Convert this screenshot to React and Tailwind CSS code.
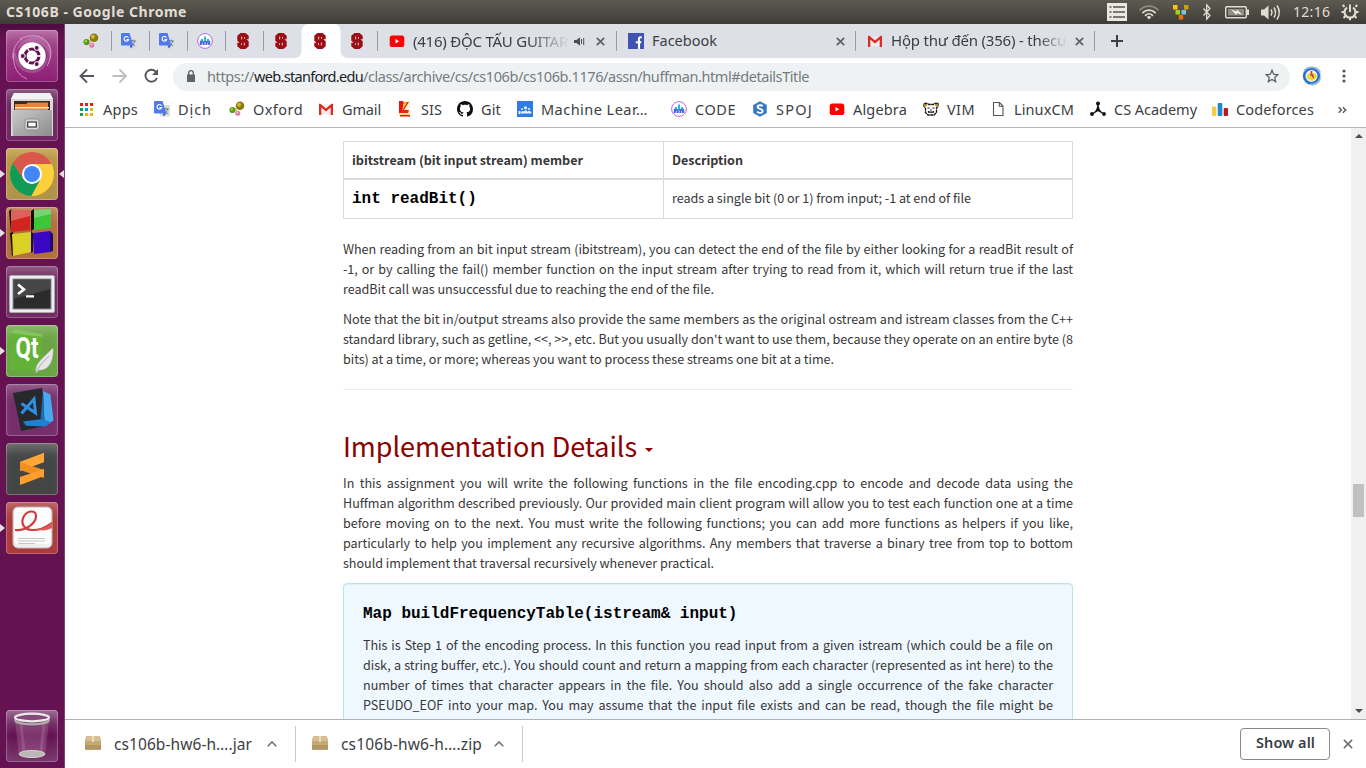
import React, { useLayoutEffect, useRef } from "react";

/* Single-line label that spreads its letters over a given width. */
function Fit({ w, children, className = "" }) {
  const ref = useRef(null);
  useLayoutEffect(() => {
    const el = ref.current;
    el.style.letterSpacing = "0px";
    const natural = el.getBoundingClientRect().width;
    el.style.letterSpacing = (w - natural) / el.textContent.length + "px";
  }, [w, children]);
  return (
    <span ref={ref} className={"inline-block shrink-0 whitespace-pre " + className}>
      {children}
    </span>
  );
}

/* ---------- favicons ---------- */
const Svg = ({ s = 16, children, className = "" }) => (
  <svg width={s} height={s} viewBox="0 0 16 16" className={"block shrink-0 " + className}>
    {children}
  </svg>
);

const Oxford = () => (
  <Svg>
    <path d="M4 9 8 7l3-3M7 8l1 4" stroke="#c9b458" strokeWidth="0.8" fill="none" />
    <circle cx="3.5" cy="9" r="3.100" fill="#5a9a16" />
    <circle cx="2.8" cy="8.2" r="1.2" fill="#a5cf50" />
    <circle cx="11" cy="4.800" r="4.300" fill="#8c7a10" />
    <circle cx="10" cy="3.800" r="2" fill="#cfbb3a" />
    <circle cx="8.800" cy="12.200" r="2.500" fill="#dd7ba6" />
    <circle cx="8.400" cy="11.600" r="1" fill="#f3bdd4" />
  </Svg>
);
const Translate = () => (
  <Svg>
    <rect x="6" y="4" width="10" height="11.5" rx="1" fill="#dcdcdc" />
    <path d="M9.3 8h5.5M12 6.8V8M13.8 8c-.6 2.200-2 3.500-3.600 4.300M10.300 9.300c.8 1.600 2.200 2.800 3.700 3.300" stroke="#607d8b" strokeWidth="1" fill="none" />
    <path d="M1 0h7.500l3.700 12.500H1a1 1 0 0 1-1-1V1a1 1 0 0 1 1-1z" fill="#5078ef" />
    <path d="M8.700 12.500h3.500L9.800 15.600z" fill="#3b5bc4" />
    <path d="M7.400 4.700A2.300 2.300 0 1 0 7.600 6.500H5.500" stroke="#fff" strokeWidth="1.100" fill="none" />
  </Svg>
);
const Code = () => (
  <Svg>
    <circle cx="8" cy="8" r="7.400" fill="#fff" stroke="#b06be0" strokeWidth="1" />
    <path d="M3 10V7.500h1V6h2v2h1V3.500h2V8h1V6h2v1.500h1V10z" fill="#28b5e8" />
    <path d="M2.800 8.300h10.400V12H2.800z" fill="#4c5fd5" />
    <path d="M5.300 12V9.800M8 12V9M10.700 12V9.800" stroke="#dfe9ff" strokeWidth="0.900" />
  </Svg>
);
const Stanford = () => (
  <Svg>
    <path d="M5.500 0h5L13.700 2.800v3.400H9.800V3.900H6.600v1.900h4.200l2.900 2.500v4.900L10.500 16h-5l-3.200-2.800V9.800h3.900v2.300h3.200v-1.900H5.200L2.300 7.700V2.800z" fill="#9b0f14" />
    <path d="M8 0v16" stroke="#9b0f14" strokeWidth="2" />
    <path d="M6.700 3.500v3M9.300 9.500v3" stroke="#f0d6d8" strokeWidth="0.800" />
  </Svg>
);
const YouTube = () => (
  <Svg>
    <rect x="0.700" y="2.500" width="14.600" height="11.500" rx="2.600" fill="#f00" />
    <path d="M6.500 6v4.500l3.700-2.250z" fill="#fff" />
  </Svg>
);
const Facebook = () => (
  <Svg>
    <rect width="16" height="16" fill="#4052b4" />
    <path d="M13.800 4.200h-1.300c-1.100 0-1.500.6-1.500 1.600V16M7.800 9.300h5.500" stroke="#fff" strokeWidth="2.100" fill="none" />
  </Svg>
);
const Gmail = () => (
  <Svg>
    <path d="M1.500 3.500h13v10h-13z" fill="#ececec" />
    <path d="M1 13.900V2.700h1.400L8 7.600l5.600-4.900H15v11.200h-2.300V6.500L8 10.400 3.300 6.500v7.400z" fill="#dc2b22" />
  </Svg>
);
const Apps = () => (
  <Svg>
    {[
      [1, 2, "#ea1c1c"], [6, 2, "#ea1c1c"], [11, 2, "#ea1c1c"],
      [1, 7, "#10a04f"], [6, 7, "#1e88f0"], [11, 7, "#fbab10"],
      [1, 12, "#10a04f"], [6, 12, "#fbab10"], [11, 12, "#fbab10"],
    ].map(([x, y, c]) => (
      <rect key={x + "-" + y} x={x} y={y} width="3" height="3" fill={c} />
    ))}
  </Svg>
);
const Sis = () => (
  <Svg>
    <path d="M2 0h11v16H2z" fill="#fff2d8" />
    <path d="M2 0h4v12H2zM3 14h10v1.500H3z" fill="#ef1010" />
    <path d="M6 1h6L7 9h5l-1 3H3L9 3H6z" fill="#e62a1a" />
    <path d="M7 1h3L5 10M2 12.500h11v1H2z" fill="#f6d21c" />
  </Svg>
);
const Github = () => (
  <Svg>
    <path
      fill="#101010"
      d="M8 0C3.580 0 0 3.580 0 8c0 3.540 2.290 6.530 5.470 7.590.4.070.55-.17.55-.38 0-.19-.01-.82-.01-1.490-2.010.37-2.530-.49-2.690-.94-.09-.23-.48-.94-.82-1.130-.28-.15-.68-.52-.01-.53.63-.01 1.080.58 1.230.82.72 1.210 1.870.87 2.330.66.070-.52.28-.87.51-1.070-1.780-.2-3.640-.89-3.640-3.950 0-.87.31-1.590.82-2.150-.08-.2-.36-1.020.08-2.120 0 0 .67-.21 2.200.82.64-.18 1.320-.27 2-.27s1.360.09 2 .27c1.530-1.040 2.200-.82 2.200-.82.44 1.100.16 1.920.08 2.120.51.56.82 1.270.82 2.150 0 3.070-1.870 3.750-3.650 3.950.29.25.54.73.54 1.480 0 1.070-.01 1.930-.01 2.200 0 .21.15.46.55.38A8.010 8.010 0 0 0 16 8c0-4.420-3.580-8-8-8z"
    />
  </Svg>
);
const Learn = () => (
  <Svg>
    <rect width="16" height="16" fill="#2f7de1" />
    <circle cx="8.500" cy="6.800" r="1.500" fill="#fff" />
    <circle cx="5" cy="8" r="1" fill="#dcebff" />
    <circle cx="12" cy="8" r="1.100" fill="#dcebff" />
    <path d="M1.500 10h2v3h-2zM4 12.500c0-3 3-3 3-1 0-3 3.500-3 3.500 0 0-2 4-2 4 1z" fill="#e9f3ff" />
  </Svg>
);
const Spoj = () => (
  <Svg>
    <path d="M8 .2 14.800 4v8L8 15.800 1.200 12V4z" fill="#3478c6" />
    <path d="M10.700 5.200C9.500 3.700 5.400 3.900 5.600 6.200c.2 2 4.900 1.500 5 3.700.1 2.400-4.200 2.600-5.500.6" stroke="#fff" strokeWidth="1.900" fill="none" />
  </Svg>
);
const Vim = () => (
  <Svg>
    <path d="M1 5.500V2.500h3.500L6 3.500h4l1.500-1h3.500v3L13.500 7v4.500L11 14H5l-2.500-2.500V7z" fill="#fff" stroke="#111" strokeWidth="1.300" strokeDasharray="3 .5" />
    <path d="M1 3h3v1.500L2 6H1zM12 3h3v3h-1l-2-1.500z" fill="#b98a20" />
    <path d="M4.500 7h2M9.500 7h2M7.200 9h1.600M5.500 10v1.200h5V10" stroke="#111" strokeWidth="1.200" fill="none" />
  </Svg>
);
const Page = () => (
  <Svg>
    <path d="M3.500 1.500h6l3.500 3.500v9.500H3.500zM9.300 1.500V5.200H13" fill="#fff" stroke="#555" strokeWidth="1.100" />
  </Svg>
);
const Academy = () => (
  <Svg>
    <path d="M8 2.500v7M8 9.500 2 13M8 9.500l6 3.500M4.500 11.500C7 9.500 7.800 7 8 4c.2 3 1 5.500 3.500 7.500" stroke="#111" strokeWidth="1.300" fill="none" />
    <circle cx="8" cy="2.500" r="2" fill="#111" />
    <circle cx="2" cy="13" r="1.900" fill="#111" />
    <circle cx="14" cy="13" r="1.900" fill="#111" />
  </Svg>
);
const Forces = () => (
  <Svg>
    <rect x="0" y="5.500" width="4.300" height="9.500" rx="1" fill="#f8cb45" />
    <rect x="5.700" y="2" width="4.600" height="13" rx="1" fill="#1a8bd0" />
    <rect x="11.700" y="7" width="4.300" height="8" rx="1" fill="#c0171c" />
  </Svg>
);
const Cross = ({ s = 9, c = "#5f6368", w = 1.7 }) => (
  <svg width={s} height={s} viewBox="0 0 9 9" className="block shrink-0">
    <path d="M.8.8l7.400 7.400M8.200.8.8 8.200" stroke={c} strokeWidth={w} />
  </svg>
);

/* ---------- desktop panel ---------- */
function Panel() {
  return (
    <header className="flex h-6 shrink-0 items-center bg-linear-to-b from-[#5d5b50] to-[#3d3c38] pb-px pl-1.5 text-[#e2ddd4]">
      <Fit w={181} className="text-[14px] leading-[22px] font-bold">CS106B - Google Chrome</Fit>
      <svg width="260" height="23" viewBox="1106 0 260 23" className="ml-auto block shrink-0">
        <rect x="1107" y="3" width="20" height="18" fill="#eae8e3" />
        <path d="M1109.500 7h2M1113 7h12M1109.500 12h2M1113 12h12M1109.500 17h2M1113 17h12" stroke="#55534c" strokeWidth="1.500" />
        <g fill="none" strokeLinecap="round">
          <path d="M1140 9.800a12.700 12.700 0 0 1 18 0" stroke="#8e8b81" strokeWidth="1.700" />
          <path d="M1142.800 12.600a8.800 8.800 0 0 1 12.400 0M1145.500 15.300a5 5 0 0 1 7 0" stroke="#e2ddd4" strokeWidth="1.700" />
        </g>
        <path d="M1149 19.500l-2.300-2.400a3.200 3.200 0 0 1 4.600 0z" fill="#e2ddd4" />
        <rect x="1173" y="5" width="4.500" height="4.500" fill="#fcc419" />
        <rect x="1184" y="5" width="4.500" height="4.500" fill="#c9a20c" />
        <rect x="1175.500" y="10" width="4.500" height="4.500" fill="#a4d313" />
        <rect x="1181.500" y="10" width="4.500" height="4.500" fill="#7cc4e0" />
        <rect x="1178.700" y="15" width="4.500" height="4.500" fill="#f36b0b" />
        <path d="M1203.500 8.500l6.500 7-3.300 3.500V5l3.300 3.500-6.500 7" stroke="#e2ddd4" strokeWidth="1.300" fill="none" />
        <rect x="1225.700" y="6.700" width="20.600" height="11" rx="1" fill="none" stroke="#e2ddd4" strokeWidth="1.400" />
        <rect x="1228" y="9" width="16" height="6.500" fill="#8f8c82" />
        <path d="M1247 9.500h2v5.500h-2z" fill="#e2ddd4" />
        <path d="M1231 9.500l5.500 2 .5-2 5.500 5.500-5.500-2-.8 2z" fill="#f4f1ea" />
        <path d="M1261 9.500h3l4.500-4v14l-4.500-4h-3z" fill="#e2ddd4" />
        <path d="M1271 9.500q1.800 3 0 6M1274 7.500q3 5 0 10M1277 5.500q4.500 7 0 14" stroke="#e2ddd4" strokeWidth="1.500" fill="none" />
        <text x="1293" y="17" fontSize="14" textLength="37" fill="#e2ddd4" fontFamily="Noto Sans, sans-serif">12:16</text>
        <g fill="none" stroke="#e2ddd4">
          <path d="M1347 7.600a5.500 5.500 0 1 0 6 0" strokeWidth="2.200" />
          <path d="M1350 4.500v7.500" strokeWidth="2" />
          <path d="M1344.500 6.800l-1.800-1.800M1355.500 6.800l1.800-1.800M1344.500 12h-3M1355.500 12h3M1345.500 16l-2 2M1354.500 16l2 2M1350 17.500v2.700" strokeWidth="2" />
        </g>
      </svg>
    </header>
  );
}

/* ---------- launcher ---------- */
const icons = {
  ubuntu: (
    <>
      <path d="M10 22C14 8 26 5 36 8c10 4 12 14 6 26 3-10-2-17-8-20-9-4-18-2-24 8z" fill="#fff" opacity=".16" />
      <path d="M42 26c0 12-10 20-22 16C10 39 6 28 9 18c0 10 6 18 14 20 8 2 15-3 19-12z" fill="#fff" opacity=".16" />
      <g fill="none" stroke="#f3d3ea" strokeWidth="1" opacity=".6">
        <path d="M14 9c14-7 27-2 30 9 2 7 0 13-3 18M8 23c-2 12 3 22 13 26M7 29c-1-9 3-16 9-20" />
      </g>
      <circle cx="26" cy="26.600" r="14" fill="#000" opacity=".15" />
      <circle cx="26" cy="26" r="13.700" fill="#fff" />
      <circle cx="26" cy="26" r="7" fill="none" stroke="#64154f" strokeWidth="3.200" />
      <g stroke="#fff" strokeWidth="1.500">
        <path d="M26 26h12M26 26l-6-10.500M26 26l-6 10.500" />
      </g>
      <circle cx="26" cy="26" r="5.200" fill="#fff" />
      <circle cx="16.700" cy="26" r="2.500" fill="#64154f" stroke="#fff" />
      <circle cx="30.700" cy="17.900" r="2.500" fill="#64154f" stroke="#fff" />
      <circle cx="30.700" cy="34.100" r="2.500" fill="#64154f" stroke="#fff" />
    </>
  ),
  files: (
    <>
      <path d="M8 4h36l3 6v37H5V10z" fill="#d9d9d9" />
      <path d="M8 4h36l3 6H5z" fill="#f2f2f2" />
      <path d="M8 12h36v10H8z" fill="#3a2a24" />
      <path d="M9 15h11l2-1.500h20V22H9z" fill="#e8833a" />
      <path d="M9 18h34v1.500H9z" fill="#fbe3c8" />
      <path d="M6 21h40v26H7z" fill="url(#gSteel)" />
      <rect x="19" y="30" width="14" height="11" rx="2.500" fill="#d8d8d8" stroke="#8f8f8f" />
      <rect x="21.700" y="33" width="8.600" height="5" fill="#fff" stroke="#333" strokeWidth="1.200" />
    </>
  ),
  chrome: (
    <>
      <circle cx="26" cy="26" r="22" fill="#fdd03b" />
      <path d="M26 26 6.900 15A22 22 0 0 1 45.100 15.500z" fill="#d9584b" />
      <path d="M26 16h19.600A22 22 0 0 0 6.900 15L17 31z" fill="#d9584b" />
      <path d="M6.900 15a22 22 0 0 0 18.500 33L34.500 32 26 35 17.500 31z" fill="#129b57" />
      <path d="M26 16h19.600c5 12-1 30-20 32L34.700 31z" fill="#fdd03b" />
      <circle cx="26" cy="26" r="10" fill="#fff" />
      <circle cx="26" cy="26" r="8" fill="#4285f4" />
    </>
  ),
  blocks: (
    <>
      <path d="M3 4l3-2 1 20-2 4zM25 4l3-2v20l-3 2zM4 26l3-1 2 22-3 2z" fill="#1a0b08" />
      <path d="M5 3h19v20l-19 2z" fill="#d3251f" />
      <path d="M28 3l17-1v19l-17 2z" fill="#3fc53c" />
      <path d="M6 27l19-2v20L7 49z" fill="#dbd025" />
      <path d="M28 26l16-2v21l-16 2z" fill="#3a08c4" />
      <path d="M44 24l3 3v17l-3 1zM25 24l3 3-1 18-2 1z" fill="#21056f" />
      <path d="M5 3h19v6L5 14zM28 3l17-1v5l-17 4z" fill="#fff" opacity=".28" />
    </>
  ),
  terminal: (
    <>
      <rect x="3.500" y="9.500" width="45" height="37" rx="1.500" fill="#ededed" stroke="#a9a9a9" />
      <rect x="7" y="13" width="38" height="30" fill="#2b2b2b" stroke="#8d8d8d" />
      <path d="M8 14h36v9L8 33z" fill="#fff" opacity=".13" />
      <path d="M12 18.500l6 5-6 4.500" stroke="#fff" strokeWidth="2.600" fill="none" />
      <path d="M20 30.300h8" stroke="#fff" strokeWidth="2.200" />
    </>
  ),
  qt: (
    <>
      <path d="M4 9 9 4l27 5v32l-6 5H4z" fill="#5dbb2d" opacity=".6" />
      <path d="M9 4l27 5v3L4 8z" fill="#9ed67c" opacity=".5" />
      <text x="9.500" y="33" fontSize="30" fontWeight="700" textLength="23" lengthAdjust="spacingAndGlyphs" fill="#fff" fontFamily="Roboto, sans-serif">Qt</text>
      <path d="M47 23c1 12-4 23-14 22l-3 3c-2-9 6-14 17-25z" fill="#e6e6e6" stroke="#b5b5b5" strokeWidth=".6" />
      <path d="M30 47c3-6 7-10 13-16" stroke="#9b9b9b" strokeWidth=".8" fill="none" />
    </>
  ),
  vscode: (
    <>
      <path d="M7 9l29-5 5 32-2 6-24 5z" fill="#27282c" />
      <path d="M37 7l7.500 3.500 3 26-9 6z" fill="#4aa8f0" />
      <path d="M17 37.500l20-2.500 8 3.500-6 4-19-.8z" fill="#1f7fd0" />
      <path d="M37 7l1.500 29-4-1z" fill="#1a6db3" />
      <path d="M15.500 19.500l14 9.500-1.500-14-12.500 14.500" fill="none" stroke="#2f8fe0" strokeWidth="3" />
    </>
  ),
  sublime: (
    <>
      <path d="M14 19l24-9v9l-24 9z" fill="#ff9f2e" />
      <path d="M14 19v8l24 8v-8z" fill="#f18f20" />
      <path d="M14 19l24-9v9l-12 4.500z" fill="#ffa63b" />
      <path d="M14 34l24-8v7l-24 9z" fill="#ff9f2e" />
    </>
  ),
  evince: (
    <>
      <rect x="7" y="5" width="39" height="41" rx="5" fill="#efefef" stroke="#bdbdbd" />
      <rect x="8.500" y="6" width="36" height="36" rx="3" fill="#fcfcfc" />
      <path d="M9 28c10 1 21-6 21-14 0-6-8-6-12 0-4 7 0 14 8 14 7 0 12-1 20-7" fill="none" stroke="#d43a3c" strokeWidth="2.200" />
      <path d="M29 27c6 0 11-1 17-7v6c-6 3-10 3-17 1z" fill="#e05557" />
      <path d="M12 36.500h27M12 39h27M12 41.500h17" stroke="#c6c6c6" strokeWidth="1" />
    </>
  ),
  trash: (
    <>
      <path d="M9 11h34l-4 34c-4 4-22 4-26 0z" fill="#c893bd" opacity=".25" />
      <path d="M15 14l3 28M38 14l-3 28" stroke="#fff" strokeWidth="3" opacity=".12" />
      <ellipse cx="26" cy="44" rx="13" ry="3.500" fill="#b9b9b5" stroke="#d2d2d2" />
      <path d="M8.500 8c0 7 35 7 35 0v3.500c-3 5-32 5-35 0z" fill="#b3b3ad" />
      <ellipse cx="26" cy="7.500" rx="17" ry="3.800" fill="#84487a" stroke="#ecece8" strokeWidth="2.200" />
    </>
  ),
};

function Tile({ name, bg, left, right }) {
  return (
    <div className="flex h-[52px] w-[65px] shrink-0 items-center">
      <span className={"w-1.5 " + (left ? "text-[#e6dfe4]" : "text-transparent")}>
        <svg width="5" height="8" viewBox="0 0 5 8"><path d="M0 0l5 4-5 4z" fill="currentColor" /></svg>
      </span>
      <div className={"h-[52px] w-[52px] shrink-0 overflow-hidden rounded-[4px] shadow-[inset_0_0_0_1px_rgba(255,255,255,0.24),inset_0_12px_14px_-8px_rgba(255,255,255,0.32)] " + bg}>
        <svg width="52" height="52" viewBox="0 0 52 52" className="block">{icons[name]}</svg>
      </div>
      <span className={"ml-px w-1.5 " + (right ? "text-[#e6dfe4]" : "text-transparent")}>
        <svg width="5" height="8" viewBox="0 0 5 8"><path d="M5 0 0 4l5 4z" fill="currentColor" /></svg>
      </span>
    </div>
  );
}

function Launcher() {
  return (
    <nav className="flex w-[65px] shrink-0 flex-col gap-[7px] border-r border-[#7d3f70] bg-linear-to-b from-[#4c0c40] via-[#651252] via-2% to-[#651252] pt-1.5 pb-1.5">
      <svg width="0" height="0" className="absolute">
        <linearGradient id="gSteel" x1="0" y1="0" x2="1" y2="1">
          <stop offset="0" stopColor="#c9c9c9" />
          <stop offset="1" stopColor="#8c8c8c" />
        </linearGradient>
      </svg>
      <Tile name="ubuntu" bg="bg-linear-to-b from-[#a54a8f] to-[#8e1d75]" />
      <Tile name="files" bg="bg-[#6f2861]" />
      <Tile name="chrome" bg="bg-linear-to-b from-[#b9953f] to-[#b0934b]" left right />
      <Tile name="blocks" bg="bg-[#b1703d]" left />
      <Tile name="terminal" bg="bg-[#712d63]" />
      <Tile name="qt" bg="bg-[#6ba444]" left />
      <Tile name="vscode" bg="bg-[#762f6a]" />
      <Tile name="sublime" bg="bg-[#464546]" />
      <Tile name="evince" bg="bg-[#ab3b3d]" left />
      <div className="mt-auto">
        <Tile name="trash" bg="bg-linear-to-b from-[#7f4275] via-[#651252] to-[#7a3a6e]" />
      </div>
    </nav>
  );
}

/* ---------- browser chrome ---------- */
const SmallTab = ({ children, line }) => (
  <div className="flex h-full w-[38px] shrink-0 items-center">
    <span className="flex w-[37px] justify-center pr-[3px]">{children}</span>
    <span className={"h-5 w-px " + (line ? "bg-[#9a9ca3]" : "bg-transparent")} />
  </div>
);

function Tabs() {
  return (
    <div className="flex h-[34px] shrink-0 items-center bg-[#dde0e7] pl-[9px] text-[#3c4043]">
      <SmallTab line><Oxford /></SmallTab>
      <SmallTab line><Translate /></SmallTab>
      <SmallTab line><Translate /></SmallTab>
      <SmallTab line><Code /></SmallTab>
      <SmallTab line><Stanford /></SmallTab>
      <SmallTab><Stanford /></SmallTab>
      <div className="-ml-2 h-full w-[54px] shrink-0 self-stretch">
        <svg width="54" height="34" viewBox="0 0 54 34" className="absolute">
          <path d="M0 34c5 0 7.500-3 7.500-8V8c0-5 3-8 8-8h24c5 0 7 3 7 8v18c0 5 3 8 7.500 8z" fill="#fff" />
        </svg>
        <div className="relative flex h-full items-center justify-center pr-0.5"><Stanford /></div>
      </div>
      <div className="-ml-2 flex h-full items-center"><SmallTab line><Stanford /></SmallTab></div>
      <div className="flex w-[239px] shrink-0 items-center pl-[11px]">
        <YouTube />
        <div className="-mt-px ml-2 w-[156px] mask-[linear-gradient(to_right,black_74%,transparent_100%)]">
          <Fit w={155} className="text-[15px]">(416) ĐỘC TẤU GUITAR</Fit>
        </div>
        <svg width="11" height="9" viewBox="0 0 11 9" className="ml-[5px] block">
          <path d="M0 3h2.500L6 .3v8.400L2.500 6H0z" fill="#4b4e52" />
          <path d="M7.500 2v5M9.700 1v7" stroke="#4b4e52" strokeWidth="1" />
        </svg>
        <span className="ml-[11px]"><Cross /></span>
        <span className="ml-auto h-5 w-px bg-[#9a9ca3]" />
      </div>
      <div className="flex w-[239px] shrink-0 items-center pl-[11px]">
        <Facebook />
        <Fit w={65} className="ml-2 text-[14.500px]">Facebook</Fit>
        <span className="ml-auto"><Cross /></span>
        <span className="ml-[10px] h-5 w-px bg-[#9a9ca3]" />
      </div>
      <div className="flex w-[239px] shrink-0 items-center pl-[11px]">
        <Gmail />
        <div className="-mt-0.5 ml-2 w-[176px] overflow-hidden mask-[linear-gradient(to_right,black_84%,transparent_100%)]">
          <Fit w={175} className="text-[15px]">Hộp thư đến (356) - thecu</Fit>
        </div>
        <span className="ml-auto"><Cross /></span>
        <span className="ml-[10px] h-5 w-px bg-[#9a9ca3]" />
      </div>
      <svg width="12" height="12" viewBox="0 0 12 12" className="ml-4 block">
        <path d="M6 0v12M0 6h12" stroke="#3c4043" strokeWidth="2" />
      </svg>
    </div>
  );
}

function Toolbar() {
  return (
    <div className="flex h-[37px] shrink-0 items-center bg-white">
      <svg width="86" height="18" viewBox="0 0 86 18" className="-mt-px ml-3.5 block shrink-0" fill="none" strokeWidth="1.900">
        <path d="M15 9H2M8 2.500 1.500 9 8 15.500" stroke="#54575c" />
        <path d="M33.500 9h13M40.500 2.500 47 9l-6.500 6.500" stroke="#bdbfc3" />
        <path d="M77.200 5A6 6 0 1 0 78 11" stroke="#54575c" />
        <path d="M79 2v6h-6z" fill="#54575c" />
      </svg>
      <div className="ml-[8px] flex h-7 w-[1117px] shrink-0 items-center rounded-full bg-[#eef2f3] pr-[11px] pb-px pl-[14px]">
        <svg width="8" height="12" viewBox="0 0 8 12" className="block">
          <path d="M0 4.500h8V12H0z" fill="#5f6368" />
          <path d="M1.700 5V3a2.300 2.300 0 0 1 4.600 0v2" fill="none" stroke="#5f6368" strokeWidth="1.300" />
        </svg>
        <div className="ml-3 flex text-[14.500px] leading-5">
          <Fit w={47} className="text-[#767b80]">https://</Fit>
          <Fit w={109} className="text-[#202124]">web.stanford.edu</Fit>
          <Fit w={446} className="text-[#767b80]">/class/archive/cs/cs106b/cs106b.1176/assn/huffman.html#detailsTitle</Fit>
        </div>
        <svg width="14" height="14" viewBox="0 0 14 14" className="ml-auto block">
          <path d="M7 1.300l1.700 4 4.200.3-3.200 2.800 1 4.200L7 10.400l-3.700 2.200 1-4.200L1.100 5.600l4.200-.3z" fill="none" stroke="#5f6368" strokeWidth="1.300" />
        </svg>
      </div>
      <svg width="20" height="20" viewBox="0 0 20 20" className="-mt-0.5 ml-[12px] block shrink-0">
        <circle cx="10" cy="10" r="9.500" fill="#c8d6e2" />
        <circle cx="9.500" cy="10" r="7.300" fill="#f1f3f0" stroke="#2a6fd0" strokeWidth="2.500" />
        <path d="M2 5C6 0 14 0 18 6M18 13c-2 4-6 6-10 5" stroke="#8fb7cf" strokeWidth="1.800" fill="none" />
        <path d="M5 9l4-3 5 2 1 4-5 3-5-2.500z" fill="#e9dc3e" />
        <path d="M9.500 5v3M8 9h2.500l1 3" stroke="#d3353b" strokeWidth="1.500" fill="none" />
      </svg>
      <svg width="4" height="14" viewBox="0 0 4 14" className="-mt-px ml-5 block shrink-0" fill="#54575c">
        <circle cx="2" cy="2" r="1.600" /><circle cx="2" cy="7" r="1.600" /><circle cx="2" cy="12" r="1.600" />
      </svg>
    </div>
  );
}

/* label, icon, slot width, label width */
const marks = [
  ["Apps", Apps, "w-[75px]", 35],
  ["Dịch", Translate, "w-[75px]", 34],
  ["Oxford", Oxford, "w-[89px]", 50],
  ["Gmail", Gmail, "w-[79px]", 39],
  ["SIS", Sis, "w-[60px]", 21],
  ["Git", Github, "w-[60px]", 20],
  ["Machine Lear…", Learn, "w-[154px]", 107],
  ["CODE", Code, "w-[81px]", 41],
  ["SPOJ", Spoj, "w-[77px]", 37],
  ["Algebra", YouTube, "w-[94px]", 54],
  ["VIM", Vim, "w-[67px]", 28],
  ["LinuxCM", Page, "w-[100px]", 60],
  ["CS Academy", Academy, "w-[122px]", 83],
  ["Codeforces", Forces, "w-[125px]", 78],
];

function Bookmarks() {
  return (
    <div className="flex h-[33px] shrink-0 items-center border-b border-[#b4b5b7] bg-white pb-1 pl-[14px] text-[14.500px] leading-5 text-[#3c4043]">
      {marks.map(([label, Icon, slot, w]) => (
        <div key={label} className={"flex shrink-0 items-center gap-2 " + slot}>
          <Icon />
          <Fit w={w} className="-mt-px">{label}</Fit>
        </div>
      ))}
      <svg width="9" height="8" viewBox="0 0 9 8" className="mt-0.5 ml-px block" fill="none" stroke="#54575c" strokeWidth="1.400">
        <path d="M.7 1.200 3.500 4 .7 6.800M4.900 1.200 7.700 4 4.900 6.800" />
      </svg>
    </div>
  );
}

/* ---------- page ---------- */
function Para({ lines, last, className = "" }) {
  return (
    <p className={"text-[12.600px] leading-5 text-[#373737] " + className}>
      {lines.map((l, i) =>
        i === lines.length - 1 && last ? (
          <span key={l} className="block h-5"><Fit w={last}>{l}</Fit></span>
        ) : (
          <span key={l} className="block h-5 tracking-[-0.04px] whitespace-nowrap [text-align-last:justify]">{l}</span>
        )
      )}
    </p>
  );
}

function Article() {
  return (
    <main className="ml-[278px] w-[730px] shrink-0 pt-[13px] font-['Noto_Sans_CJK_SC',sans-serif]">
      <div className="h-[78px] border border-[#dadada] text-[12.600px] leading-5 text-[#373737]">
        <div className="flex h-[38px] border-b-2 border-[#dadada] font-bold">
          <div className="w-[320px] border-r border-[#dadada] pt-2 pl-2"><Fit w={231}>ibitstream (bit input stream) member</Fit></div>
          <div className="pt-2 pl-2"><Fit w={71}>Description</Fit></div>
        </div>
        <div className="flex h-[38px]">
          <div className="w-[320px] border-r border-[#dadada] pt-[9px] pl-2 font-['Liberation_Mono',monospace] text-base leading-5 font-bold text-black">int readBit()</div>
          <div className="pt-2 pl-2"><Fit w={299}>reads a single bit (0 or 1) from input; -1 at end of file</Fit></div>
        </div>
      </div>
      <Para
        className="mt-5"
        last={371}
        lines={[
          "When reading from an bit input stream (ibitstream), you can detect the end of the file by either looking for a readBit result of",
          "-1, or by calling the fail() member function on the input stream after trying to read from it, which will return true if the last",
          "readBit call was unsuccessful due to reaching the end of the file.",
        ]}
      />
      <p className="mt-2.5 text-[12.600px] leading-5 text-[#373737]">
        <span className="block h-5 whitespace-nowrap [text-align-last:justify]">Note that the bit in/output streams also provide the same members as the original ostream and istream classes from the C++</span>
        <span className="block h-5"><Fit w={730}>{"standard library, such as getline, <<, >>, etc. But you usually don't want to use them, because they operate on an entire byte (8"}</Fit></span>
        <span className="block h-5"><Fit w={491}>bits) at a time, or more; whereas you want to process these streams one bit at a time.</Fit></span>
      </p>
      <hr className="mt-5 border-[#ebebeb]" />
      <h2 className="mt-[39px] flex h-[34px] items-center pb-px text-[27px] leading-[33px] text-[#8c0000]">
        <Fit w={294}>Implementation Details</Fit>
        <svg width="8" height="4" viewBox="0 0 8 4" className="mt-2 ml-2 block"><path d="M0 0h8L4 4z" fill="#8c0000" /></svg>
      </h2>
      <Para
        className="mt-2.5"
        last={371}
        lines={[
          "In this assignment you will write the following functions in the file encoding.cpp to encode and decode data using the",
          "Huffman algorithm described previously. Our provided main client program will allow you to test each function one at a time",
          "before moving on to the next. You must write the following functions; you can add more functions as helpers if you like,",
          "particularly to help you implement any recursive algorithms. Any members that traverse a binary tree from top to bottom",
          "should implement that traversal recursively whenever practical.",
        ]}
      />
      <section className="mt-2.5 h-[180px] rounded-[4px] border border-[#b2e5ee] bg-[#eff7ff] px-[19px] pt-5 shadow-[inset_0_1px_1px_rgba(0,0,0,0.05)]">
        <h3 className="font-['Liberation_Mono',monospace] text-base leading-5 font-bold text-black">Map buildFrequencyTable(istream&amp; input)</h3>
        <Para
          className="mt-[11px]"
          lines={[
            "This is Step 1 of the encoding process. In this function you read input from a given istream (which could be a file on",
            "disk, a string buffer, etc.). You should count and return a mapping from each character (represented as int here) to the",
            "number of times that character appears in the file. You should also add a single occurrence of the fake character",
            "PSEUDO_EOF into your map. You may assume that the input file exists and can be read, though the file might be",
          ]}
        />
      </section>
    </main>
  );
}

function Scrollbar() {
  return (
    <div className="ml-auto flex w-[15px] shrink-0 flex-col items-center bg-[#f0f0f0]">
      <svg width="8" height="4" viewBox="0 0 8 4" className="mt-[6px] block"><path d="M0 4 4 0l4 4z" fill="#4a4c4f" /></svg>
      <div className="mt-[346px] h-[33px] w-[11px] bg-[#c1c1c1]" />
      <svg width="8" height="4" viewBox="0 0 8 4" className="mt-auto mb-[6px] block"><path d="M0 0h8L4 4z" fill="#4a4c4f" /></svg>
    </div>
  );
}

function Download({ name, w, slot, gap }) {
  return (
    <div className={"flex h-9 shrink-0 items-center border-r border-[#c9cacc] " + slot}>
      <svg width="16" height="14" viewBox="0 0 16 14" className="-mt-0.5 block">
        <path d="M1.500 0h13L16 4v9a1 1 0 0 1-1 1H1a1 1 0 0 1-1-1V4z" fill="#c6a875" />
        <path d="M1.500 0h13L16 5H0z" fill="#d8bf91" />
        <path d="M0 9h16v4.500H0z" fill="#ab8d5c" opacity=".7" />
        <path d="M7.200 0h1.600v6H7.200z" fill="#f1e5c9" />
      </svg>
      <Fit w={w} className="mt-0.5 ml-[13px] text-[15.500px] text-[#3c4043]">{name}</Fit>
      <svg width="10" height="6" viewBox="0 0 10 6" className={"block " + gap}><path d="M.7 5.300 5 1l4.300 4.300" fill="none" stroke="#6f7377" strokeWidth="1.600" /></svg>
    </div>
  );
}

function Shelf() {
  return (
    <footer className="flex h-[49px] shrink-0 items-center border-t border-[#b0b1b3] bg-white pr-[13px]">
      <Download name="cs106b-hw6-h….jar" w={138} slot="w-[231px] pl-5" gap="ml-[15px]" />
      <Download name="cs106b-hw6-h….zip" w={141} slot="w-[227px] pl-4" gap="ml-3" />
      <button className="ml-auto flex h-8 w-[90px] items-center justify-center rounded-[4px] border border-[#85888c] pb-0.5 pl-px text-[14.500px] font-semibold text-[#3c4043]">
        <Fit w={59}>Show all</Fit>
      </button>
      <span className="ml-[13px]"><Cross s={10} c="#6f7377" w={1.500} /></span>
    </footer>
  );
}

export default function App() {
  return (
    <div className="flex h-[768px] w-[1366px] flex-col overflow-hidden bg-white font-['Noto_Sans','Open_Sans',sans-serif]">
      <Panel />
      <div className="flex min-h-0 flex-1">
        <Launcher />
        <div className="flex min-w-0 flex-1 flex-col">
          <Tabs />
          <Toolbar />
          <Bookmarks />
          <div className="flex min-h-0 flex-1 overflow-hidden bg-white">
            <Article />
            <Scrollbar />
          </div>
          <Shelf />
        </div>
      </div>
    </div>
  );
}
